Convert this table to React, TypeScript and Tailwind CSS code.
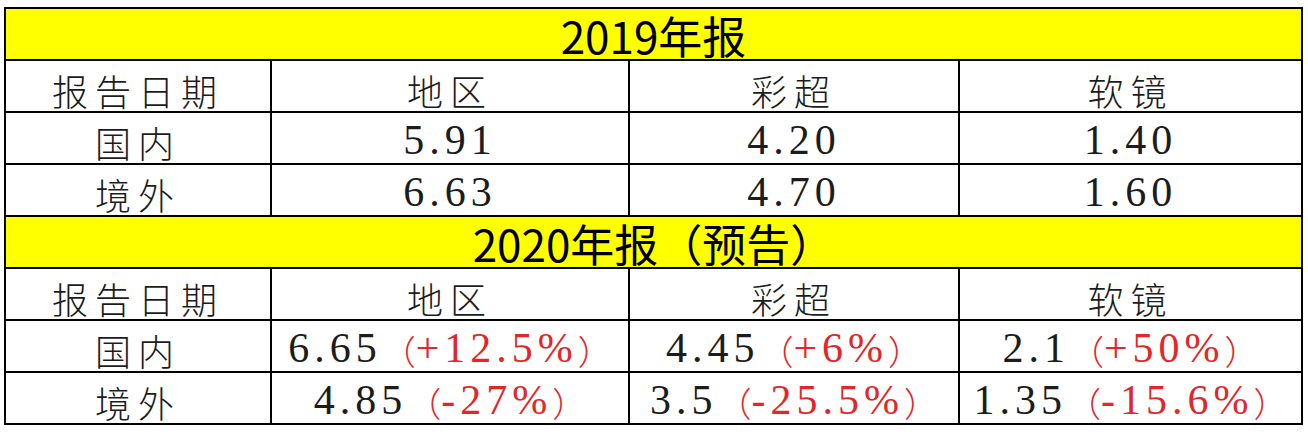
const NUM = "font-['Liberation_Serif','Noto_Sans_CJK_SC',serif] text-[42px] tracking-[5px]";
const CJK = "font-['Noto_Sans_CJK_SC',sans-serif] font-light";

type Part = { v: string; delta?: string };

const report2019: Part[][] = [
  [{ v: '5.91' }, { v: '4.20' }, { v: '1.40' }],
  [{ v: '6.63' }, { v: '4.70' }, { v: '1.60' }],
];

const report2020: Part[][] = [
  [
    { v: '6.65', delta: '+12.5%' },
    { v: '4.45', delta: '+6%' },
    { v: '2.1', delta: '+50%' },
  ],
  [
    { v: '4.85', delta: '-27%' },
    { v: '3.5', delta: '-25.5%' },
    { v: '1.35', delta: '-15.6%' },
  ],
]

const rowLabels = ['国内', '境外']
const headers = ['报告日期', '地区', '彩超', '软镜']

function Cell({ children }: { children: React.ReactNode }) {
  return (
    <div className="flex h-[50px] items-end justify-center whitespace-nowrap bg-white pb-[1px] text-[#1c1c1c] leading-[1.05]">
      {children}
    </div>
  )
}

function Banner({ title }: { title: string }) {
  return (
    <div className="col-span-4 flex h-[50px] items-center justify-center bg-[#ffff00] pt-[3px] font-['Noto_Sans_CJK_SC',sans-serif] text-[44px] leading-[1.05] text-black">
      {title}
    </div>
  )
}

function HeaderRow() {
  return (
    <>
      {headers.map((h) => (
        <Cell key={h}>
          <span className={`${CJK} text-[36px] tracking-[7px]`}>{h}</span>
        </Cell>
      ))}
    </>
  )
}

function DataRows({ rows }: { rows: Part[][] }) {
  return (
    <>
      {rows.map((row, i) => (
        <div key={i} className="contents">
          <Cell>
            <span className={`${CJK} text-[36px] tracking-[7px]`}>{rowLabels[i]}</span>
          </Cell>
          {row.map((p, j) => (
            <Cell key={j}>
              <span className={NUM}>{p.v}</span>
              {p.delta && (
                <span className="flex items-end text-[#e3262a]">
                  <span className={`${CJK} pb-[1px] text-[34px]`}>（</span>
                  <span className={NUM}>{p.delta}</span>
                  <span className={`${CJK} pb-[1px] text-[34px]`}>）</span>
                </span>
              )}
            </Cell>
          ))}
        </div>
      ))}
    </>
  )
}

export default function App() {
  return (
    <div className="h-[432px] w-[1308px] bg-white pl-[4px] pt-[7px]">
      <div className="grid w-[1299px] grid-cols-[264px_356px_328px_341px] gap-[2px] bg-black p-[2px]">
        <Banner title="2019年报" />
        <HeaderRow />
        <DataRows rows={report2019} />
        <Banner title="2020年报（预告）" />
        <HeaderRow />
        <DataRows rows={report2020} />
      </div>
    </div>
  )
}
